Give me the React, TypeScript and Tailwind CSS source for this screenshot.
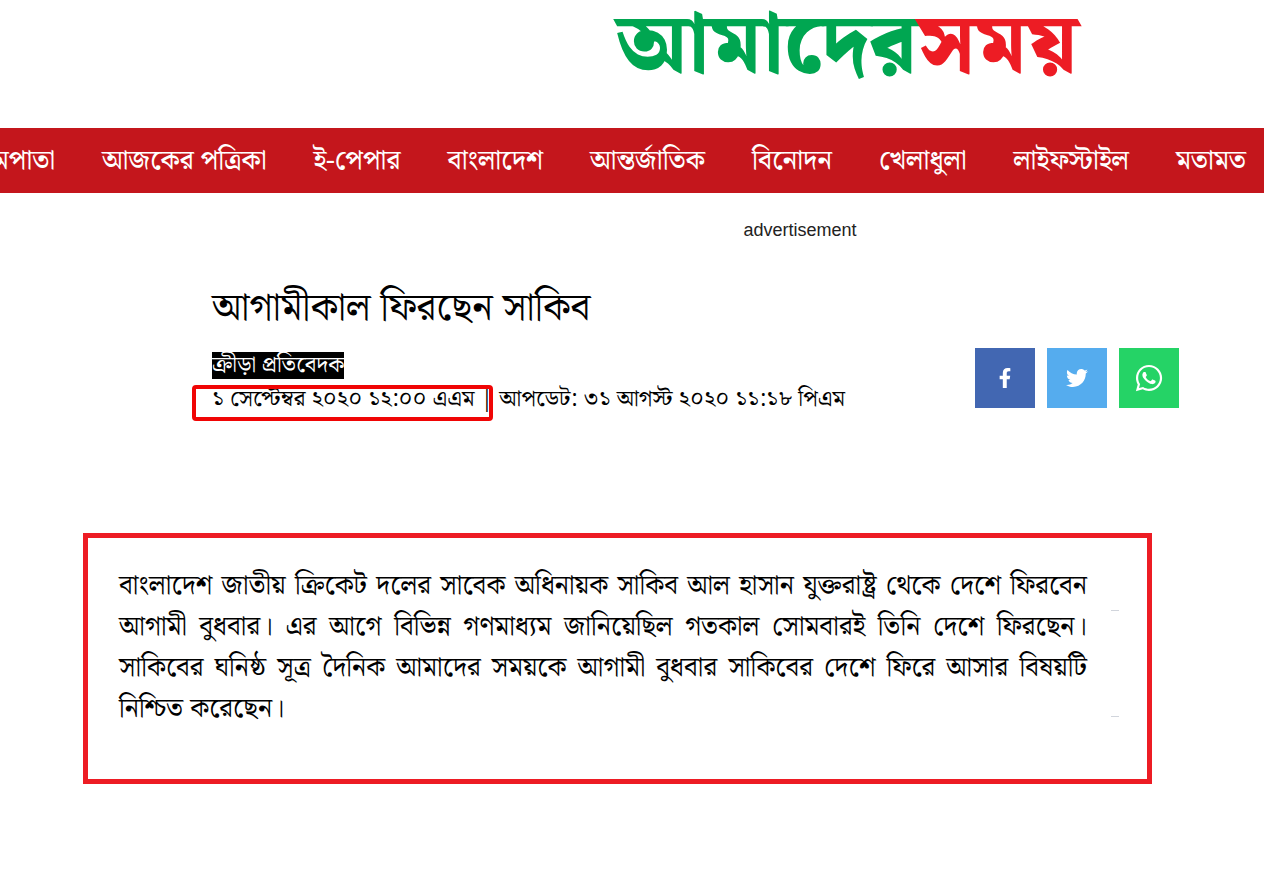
import { FaFacebookF, FaTwitter, FaWhatsapp } from "react-icons/fa";

const NAV_ITEMS = [
  "প্রথমপাতা",
  "আজকের পত্রিকা",
  "ই-পেপার",
  "বাংলাদেশ",
  "আন্তর্জাতিক",
  "বিনোদন",
  "খেলাধুলা",
  "লাইফস্টাইল",
  "মতামত",
];

const SHARE_LINKS = [
  { label: "Facebook", icon: FaFacebookF, bg: "bg-[#4267b2]", size: "size-5" },
  { label: "Twitter", icon: FaTwitter, bg: "bg-[#55acee]", size: "size-[22px]" },
  { label: "WhatsApp", icon: FaWhatsapp, bg: "bg-[#25d366]", size: "size-[30px]" },
];

function Masthead() {
  return (
    <header className="flex h-32 justify-center pl-[425px]">
      <a href="#" className="whitespace-nowrap text-[84px] font-black leading-[92px]">
        <span className="text-[#00a651]">আমাদের</span>
        <span className="text-[#ed1c24]">সময়</span>
      </a>
    </header>
  );
}

function NavBar() {
  return (
    <nav className="mr-1.5 flex h-[65px] items-center justify-end gap-[47px] overflow-hidden bg-[#c4161c] pr-[18px] pt-1">
      {NAV_ITEMS.map((item) => (
        <a
          key={item}
          href="#"
          className="shrink-0 whitespace-nowrap text-[27px] font-medium text-white"
        >
          {item}
        </a>
      ))}
    </nav>
  );
}

function ShareButtons() {
  return (
    <div className="mb-[9px] flex shrink-0 gap-3">
      {SHARE_LINKS.map(({ label, icon: Icon, bg, size }) => (
        <a
          key={label}
          href="#"
          aria-label={label}
          className={`flex size-[60px] items-center justify-center text-white ${bg}`}
        >
          <Icon className={size} />
        </a>
      ))}
    </div>
  );
}

function ArticleHeader() {
  return (
    <div className="flex items-end justify-between pl-[212px] pr-[91px] pt-[38px]">
      <div>
        <h1 className="text-[39px] leading-[54px]">আগামীকাল ফিরছেন সাকিব</h1>
        <p className="mt-4 text-[23px] leading-[27px]">
          <span className="inline-block bg-black text-white">ক্রীড়া প্রতিবেদক</span>
        </p>
        <p className="mt-1 whitespace-nowrap text-[23px] leading-[34px]">
          <span className="relative inline-block">
            ১ সেপ্টেম্বর ২০২০ ১২:০০ এএম |
            {/* marker around the publish date */}
            <span className="absolute -bottom-1 -left-5 right-0 top-0.5 rounded-sm border-4 border-[#f00505]" />
          </span>{" "}
          আপডেট: ৩১ আগস্ট ২০২০ ১১:১৮ পিএম
        </p>
      </div>
      <ShareButtons />
    </div>
  );
}

function ArticleBody() {
  return (
    <section className="ml-[83px] mr-[118px] mt-[116px] flex gap-6 border-[5px] border-[#ed1c24] pb-[49px] pl-[31px] pr-7 pt-7">
      <p className="flex-1 text-justify text-[27px] leading-[41px]">
        বাংলাদেশ জাতীয় ক্রিকেট দলের সাবেক অধিনায়ক সাকিব আল হাসান যুক্তরাষ্ট্র থেকে
        দেশে ফিরবেন আগামী বুধবার। এর আগে বিভিন্ন গণমাধ্যম জানিয়েছিল গতকাল সোমবারই
        তিনি দেশে ফিরছেন। সাকিবের ঘনিষ্ঠ সূত্র দৈনিক আমাদের সময়কে আগামী বুধবার
        সাকিবের দেশে ফিরে আসার বিষয়টি নিশ্চিত করেছেন।
      </p>
      <div className="flex w-2 flex-col gap-[105px] pt-11">
        <hr className="border-gray-300" />
        <hr className="border-gray-300" />
      </div>
    </section>
  );
}

export default function App() {
  return (
    <div className="min-h-screen overflow-x-hidden bg-white font-['Noto_Serif_Bengali','Liberation_Sans',sans-serif] text-black">
      <Masthead />
      <NavBar />
      <main>
        <p className="pl-[330px] pt-6 text-center font-['Liberation_Sans',sans-serif] text-[18px] leading-[27px] text-[#222222]">
          advertisement
        </p>
        <ArticleHeader />
        <ArticleBody />
      </main>
    </div>
  );
}
